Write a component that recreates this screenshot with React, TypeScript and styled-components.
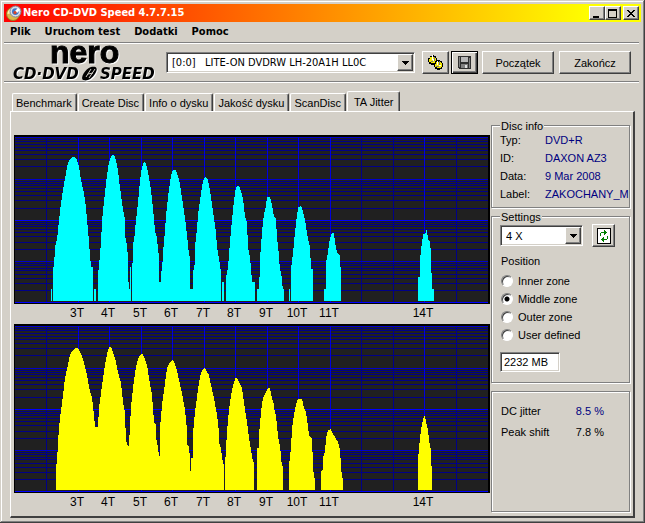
import React, { useState } from "react";
import styled, { createGlobalStyle, css } from "styled-components";

const face = "#d4d0c8";
const shade = "#808080";
const dark = "#404040";
const navy = "#000080";

const GlobalStyle = createGlobalStyle`
  * { box-sizing: border-box; }
  body {
    margin: 0;
    background: ${face};
    color: #000;
    font: 11px/14px "Liberation Sans", Arial, sans-serif;
  }
  button, select, input { font: inherit; color: inherit; }
`;

const raised = css`
  background: ${face};
  border: 1px solid;
  border-color: #fff ${dark} ${dark} #fff;
  box-shadow: inset -1px -1px 0 ${shade};
`;

const sunken = css`
  background: #fff;
  border: 1px solid;
  border-color: ${shade} #fff #fff ${shade};
  box-shadow: inset 1px 1px 0 ${dark}, inset -1px -1px 0 ${face};
`;

const Window = styled.main`
  display: flex;
  flex-direction: column;
  min-height: 100vh;
  padding: 4px 4px 5px;
  background: ${face};
  box-shadow: inset -1px -1px 0 ${dark}, inset 1px 1px 0 ${face},
    inset -2px -2px 0 ${shade}, inset 2px 2px 0 #fff;
`;

const TitleBar = styled.header`
  display: flex;
  align-items: center;
  height: 18px;
  padding: 0 2px;
  background: linear-gradient(90deg, #ff0000, #ffff00 92%);
`;

const Title = styled.h1`
  flex: 1;
  margin: 0 0 0 1px;
  color: #fff;
  font: bold 11px/18px "DejaVu Sans Condensed", "DejaVu Sans", sans-serif;
`;

const CaptionButton = styled.button<{ $apart?: boolean }>`
  ${raised}
  display: grid;
  place-items: center;
  width: 16px;
  height: 14px;
  padding: 0;
  margin-left: ${(p) => (p.$apart ? 2 : 0)}px;
`;

const MenuBar = styled.nav`
  display: flex;
  gap: 14px;
  height: 20px;
  padding: 0 6px;
`;

const MenuLink = styled.a`
  color: #000;
  text-decoration: none;
  font: bold 11px/20px "DejaVu Sans Condensed", "DejaVu Sans", sans-serif;
`;

const Toolbar = styled.div`
  display: flex;
  align-items: center;
  height: 41px;
  margin-right: 2px;
  padding: 0 8px 0 6px;
  border-top: 1px solid ${shade};
  border-bottom: 1px solid #fff;
  box-shadow: inset 0 1px 0 #fff, inset 0 -1px 0 ${shade};
`;

const LogoSvg = styled.svg`
  flex: none;
  overflow: visible;
  filter: drop-shadow(1px 1px 0 #fff);
`;

const ComboFrame = styled.span<{ $grow?: boolean }>`
  ${sunken}
  display: grid;
  align-items: center;
  flex: ${(p) => (p.$grow ? "1 1 0" : "0 0 83px")};
  min-width: 0;
  height: 21px;
  padding: 1px;
`;

const ComboSelect = styled.select<{ $wide?: boolean }>`
  grid-area: 1 / 1;
  appearance: none;
  width: 100%;
  height: 17px;
  padding: 0 18px 0 4px;
  border: 0;
  outline: 0;
  background: transparent;
  white-space: pre;
  ${(p) => p.$wide && css`font: 11px "DejaVu Sans Condensed", "DejaVu Sans", sans-serif;`}
`;

const ComboArrow = styled.span`
  ${raised}
  grid-area: 1 / 1;
  justify-self: end;
  display: grid;
  place-items: center;
  width: 16px;
  height: 17px;
  pointer-events: none;
`;

const Actions = styled.div`
  display: flex;
  gap: 2px;
  margin: 0 4px 0 7px;
`;

const IconButton = styled.button<{ $focused?: boolean; $small?: boolean }>`
  ${raised}
  display: grid;
  place-items: center;
  width: ${(p) => (p.$small ? 23 : 27)}px;
  height: 23px;
  padding: 0;
  ${(p) => p.$focused && css`border-color: #000; box-shadow: inset 1px 1px 0 #fff, inset -1px -1px 0 ${dark}, inset -2px -2px 0 ${shade};`}
`;

const Commands = styled.div`
  display: flex;
  gap: 5px;
`;

const PushButton = styled.button`
  ${raised}
  width: 72px;
  height: 23px;
  padding: 0;
`;

const Tabs = styled.div`
  display: flex;
  align-items: flex-end;
  gap: 1px;
  margin: 8px 0 0 8px;
`;

const Tab = styled.button<{ $active?: boolean }>`
  height: ${(p) => (p.$active ? 21 : 18)}px;
  margin-bottom: ${(p) => (p.$active ? -1 : 0)}px;
  padding: 0 ${(p) => (p.$active ? 6 : 4)}px 0 ${(p) => (p.$active ? 6 : 3)}px;
  background: ${face};
  border: 1px solid;
  border-color: #fff ${dark} transparent #fff;
  border-bottom: 0;
  border-radius: 2px 2px 0 0;
  box-shadow: inset -1px 0 0 ${shade};
  white-space: nowrap;
`;

const Panel = styled.section`
  flex: 1;
  display: grid;
  grid-template-columns: minmax(0, 1fr) 140px;
  gap: 1px;
  margin: 0 6px;
  padding: 0 2px 3px 3px;
  border: solid;
  border-width: 1px 2px 2px 1px;
  border-color: #fff ${dark} ${dark} #fff;
`;

const Charts = styled.div`
  padding-top: 23px;
`;

const ChartSvg = styled.svg`
  display: block;
  width: 100%;
  height: auto;
`;

const ChartLabel = styled.text`
  font: 12px "Liberation Sans", Arial, sans-serif;
  text-anchor: middle;
`;

const Side = styled.aside`
  display: flex;
  flex-direction: column;
  gap: 1px;
  padding: 6px 0 0;
`;

const Group = styled.fieldset<{ $height: number }>`
  min-width: 0;
  min-height: ${(p) => p.$height}px;
  margin: 0 1px 0 0;
  padding: 0 8px;
  border: 1px solid ${shade};
  box-shadow: 1px 1px 0 #fff, inset 1px 1px 0 #fff;
`;

const GroupTitle = styled.legend`
  padding: 2px 1px 0;
  line-height: 12px;
  background: ${face};
`;

const InfoList = styled.dl`
  display: grid;
  grid-template-columns: 45px 1fr;
  line-height: 18px;
  margin: -1px 0 0;
`;

const InfoTerm = styled.dt``;

const InfoValue = styled.dd`
  margin: 0;
  color: ${navy};
  white-space: nowrap;
`;

const SpeedRow = styled.div`
  display: flex;
  align-items: center;
  gap: 9px;
  margin-top: 1px;
`;

const Caption = styled.h2`
  margin: 7px 0 4px 1px;
  font: inherit;
`;

const RadioLabel = styled.label`
  display: flex;
  align-items: center;
  gap: 5px;
  height: 18px;
`;

const Radio = styled.input`
  appearance: none;
  width: 12px;
  height: 12px;
  margin: 0 0 0 1px;
  border: 1px solid;
  border-color: ${shade} #fff #fff ${shade};
  border-radius: 50%;
  background: #fff;
  box-shadow: inset 1px 1px 0 ${dark};
  &:checked {
    background: radial-gradient(circle at center, #000 2px, #fff 3px);
  }
`;

const SizeInput = styled.input`
  ${sunken}
  display: block;
  width: 60px;
  height: 20px;
  margin-top: 8px;
  padding: 0 3px;
`;

const Results = styled.dl`
  flex: 1;
  display: grid;
  grid-template-columns: 1fr auto;
  align-content: start;
  row-gap: 7px;
  margin: 7px 1px 1px 0;
  padding: 12px 25px 0 9px;
  border: 1px solid ${shade};
  box-shadow: 1px 1px 0 #fff, inset 1px 1px 0 #fff;
`;

const ResultValue = styled.dd<{ $blue?: boolean }>`
  margin: 0;
  color: ${(p) => (p.$blue ? navy : "#000")};
`;

const Arrow = () => (
  <svg width="7" height="4" viewBox="0 0 7 4" shapeRendering="crispEdges" aria-hidden="true">
    <path d="M0 0h7v1h-1v1h-1v1h-1v1h-1v-1h-1v-1h-1v-1h-1z" />
  </svg>
);

const AppIcon = () => (
  <svg width="16" height="16" viewBox="0 0 16 16" aria-hidden="true">
    <circle cx="7" cy="9" r="6.5" fill="#d9b84d" stroke="#9c7a20" />
    <path d="M1.5 9A6 6 0 0 1 5 3.5L7 8z" fill="#fff3b0" />
    <circle cx="9.5" cy="6.5" r="5.5" fill="#d8dde8" stroke="#7d8798" />
    <circle cx="9.4" cy="6.6" r="3.4" fill="#3d78c8" />
    <path d="M9 6l3-3 2 2-3 3z" fill="#fff" />
    <circle cx="9" cy="7.6" r="1.6" fill="#d8452c" />
  </svg>
);

const Logo = () => (
  <LogoSvg width="156" height="37" viewBox="0 0 156 37" role="img" aria-label="nero CD-DVD SPEED">
    <text x="40" y="19" fontFamily="Liberation Sans" fontWeight="700" fontSize="32" stroke="#000">nero</text>
    <text x="3" y="35" fontFamily="DejaVu Sans" fontWeight="700" fontStyle="italic" fontSize="15">CD·DVD</text>
    <text x="90" y="35" fontFamily="DejaVu Sans" fontWeight="700" fontStyle="italic" fontSize="15">SPEED</text>
    <path d="M73 36c-3-2 2-11 8-13 5-1 7 1 5 5-2 5-8 10-13 8z" />
    <path d="M76 33l5-8M79 34l6-9M78 30l5-1" stroke={face} strokeWidth="1" />
  </LogoSvg>
);

const DiscsIcon = () => (
  <svg width="17" height="17" viewBox="0 0 17 17" shapeRendering="crispEdges" aria-hidden="true">
    <path d="M3 2h2V1h2v1h2v2h1v4H9v2H7v1H4v-1H2V8H1V4h2z" fill="#000" />
    <path d="M3 3h5v1h1v4H8v1H4V8H2V5h1z" fill="#f5e900" />
    <path d="M5 1h1v5H5zM6 5h2v2H6z" fill="#fff" />
    <path d="M7 3h1v4H7zM4 7h2v1H4z" fill="#777" />
    <path d="M8 7h2V6h3v1h2v2h1v4h-1v2h-2v1h-3v-1H8v-2H7V9h1z" fill="#000" />
    <path d="M9 8h5v1h1v4h-1v1h-4v-1H8v-3h1z" fill="#f5e900" />
    <path d="M10 7h1v4h-1zM12 11h2v1h-2z" fill="#fff" />
    <path d="M12 7h1v4h-1zM9 12h3v1H9z" fill="#777" />
  </svg>
);

const SaveIcon = () => (
  <svg width="13" height="13" viewBox="0 0 13 13" shapeRendering="crispEdges" aria-hidden="true">
    <path d="M0 0h13v13H1l-1-1z" fill="#303030" />
    <path d="M1 1h1v10H1zM11 2h1v10h-1z" fill="#808080" />
    <path d="M3 1h7v5H3z" fill="#b8b8b8" />
    <path d="M3 8h7v4H3z" fill="#808080" />
    <path d="M7 9h2v3H7z" fill="#e0e0e0" />
  </svg>
);

const RefreshIcon = () => (
  <svg width="14" height="16" viewBox="0 0 14 16" shapeRendering="crispEdges" aria-hidden="true">
    <path d="M0 0h14v16H0z" />
    <path d="M1 1h12v14H1z" fill="#fff" />
    <path d="M3 5h1V4h3V2h1v1h1v1h1v1H9v1H8v1H7V5H4v3H3zM11 11h-1v1H7v2H6v-1H5v-1H4v-1h1v-1h1V9h1v2h3V8h1z" fill="#008000" />
  </svg>
);

const majorLines = [137, 179, 220, 261];
const minorLines = [
  139, 141, 144, 147, 150, 154, 159, 166, 181, 183, 185, 188, 191, 195, 200, 208, 222, 224, 226,
  229, 232, 236, 242, 249, 263, 265, 268, 270, 274, 278, 283, 290,
];
const ticks: [number, string][] = [
  [78, "3T"], [109, "4T"], [141, "5T"], [172, "6T"], [204, "7T"], [235, "8T"], [267, "9T"],
  [298, "10T"], [330, "11T"], [424, "14T"],
];

const pitPeaks = [
  "51,301 51,289 52,289 52,301",
  "53,301 53,267 54,267 55,248 56,242 57,240 59,220 61,203 63,190 66,173 68,163 71,158 72,157 75,157 77,160 79,167 81,180 84,193 86,208 88,230 90,255 91,267 93,267 93,301",
  "94,301 94,289 96,289 96,301",
  "98,301 98,273 99,268 100,253 101,243 102,222 103,210 105,193 107,175 109,162 111,157 112,155 114,155 116,160 118,170 119,180 121,195 123,209 125,220 125,235 127,246 128,258 128,282 129,282 129,289 130,289 130,267 131,267 131,301",
  "132,301 132,282 133,244 134,241 136,220 138,203 140,181 142,167 144,162 145,162 147,167 149,178 151,190 153,208 155,231 157,237 158,250 159,255 159,282 161,282 161,273 162,270 163,255 164,240 165,232 166,215 167,207 169,189 171,176 173,170 176,170 178,176 180,184 182,198 184,211 186,226 188,245 189,254 190,258 190,289 193,289 193,273 195,262 195,247 197,229 198,215 200,201 202,186 204,178 206,177 208,180 210,190 212,204 214,218 216,232 217,247 219,259 221,272 221,301",
  "222,301 222,282 224,282 224,301",
  "226,301 226,277 228,268 229,255 230,242 232,220 234,200 236,187 237,186 239,186 241,191 243,199 245,216 247,223 248,247 250,258 251,268 252,282 255,282 255,301",
  "257,301 257,289 259,289 259,277 260,277 260,258 261,247 262,232 264,214 266,206 267,197 270,197 272,205 274,217 276,219 277,238 279,255 280,273 281,269 282,282 283,289 284,289 284,301",
  "289,301 289,289 290,289 290,301",
  "291,301 291,269 293,253 295,232 297,215 299,205 300,208 301,205 303,212 305,220 307,233 309,243 310,246 311,269 313,269 313,301",
  "324,301 324,289 326,289 326,263 328,252 330,238 332,233 334,233 335,243 337,252 340,256 340,267 341,267 341,301",
  "418,301 418,277 420,277 420,260 422,242 424,232 425,236 426,230 427,230 428,240 430,241 431,255 432,289 434,289 434,301",
];

const landPeaks = [
  "56,301 56,277 57,273 58,254 59,239 60,229 62,214 63,206 65,189 68,176 70,166 73,161 75,159 77,159 79,161 82,167 84,174 87,186 89,198 92,209 94,226 95,238 98,238 99,219 101,204 103,189 105,176 107,165 109,158 111,158 113,163 115,169 118,183 121,194 123,213 125,224 126,253 127,254 128,257 129,257 130,236 131,218 133,199 135,184 137,173 140,166 142,164 144,168 147,176 149,189 152,206 154,233 156,236 156,249 158,258 159,267 160,267 160,239 162,216 165,194 167,179 170,173 172,171 174,173 177,181 179,191 182,204 185,221 187,241 187,256 189,258 190,269 190,282 191,282 191,269 193,269 193,244 195,223 197,208 199,193 201,184 204,179 206,181 209,186 211,196 214,209 217,226 219,243 219,253 221,259 222,269 224,277 224,301",
  "225,301 225,277 226,259 227,243 229,221 231,206 234,193 236,188 238,191 242,199 245,221 247,233 249,249 251,261 253,273 254,273 254,301",
  "257,301 257,259 259,259 259,246 261,223 263,209 266,203 268,199 270,199 272,209 274,216 275,225 276,226 277,238 279,254 280,256 281,268 282,277 283,277 283,301",
  "289,301 289,276 291,259 292,239 294,226 296,216 298,210 302,210 304,219 306,223 308,238 309,246 312,250 313,276 314,289 315,289 315,301",
  "321,301 321,282 323,281 323,269 325,263 326,249 328,241 331,240 332,243 335,248 338,253 340,261 341,276 342,289 343,289 343,301",
  "418,301 418,273 419,258 421,241 423,231 424,227 425,227 426,233 428,241 429,251 431,261 431,276 432,278 432,301",
];

function Chart({ peaks, color, label }: { peaks: string[]; color: string; label: string }) {
  return (
    <ChartSvg viewBox="14 135 476 189" role="img" aria-label={label}>
      <g shapeRendering="crispEdges">
        <rect x="14" y="135" width="476" height="169" fill="#000" />
        <rect x="15" y="137" width="473" height="166" fill="#202020" />
        {minorLines.map((y) => <rect key={y} x="15" y={y} width="473" height="1" fill="#000088" />)}
        {[46, 361, 393, 456].map((x) => <rect key={x} x={x} y="137" width="1" height="165" fill="#000088" />)}
        {majorLines.map((y) => <rect key={y} x="15" y={y} width="473" height="1" fill={y === 220 ? "#0000ff" : "#0000cc"} />)}
        {ticks.map(([x]) => <rect key={x} x={x} y="137" width="1" height="165" fill="#0000e0" />)}
        <rect x="15" y="302" width="473" height="1" fill="#0000ff" />
        {peaks.map((points) => <polygon key={points} points={points} fill={color} />)}
      </g>
      {ticks.map(([x, text]) => <ChartLabel key={x} x={x - 1} y="317">{text}</ChartLabel>)}
    </ChartSvg>
  );
}

const tabNames = ["Benchmark", "Create Disc", "Info o dysku", "Jakość dysku", "ScanDisc", "TA Jitter"];
const zones = ["Inner zone", "Middle zone", "Outer zone", "User defined"];
const disc = [["Typ:", "DVD+R"], ["ID:", "DAXON AZ3"], ["Data:", "9 Mar 2008"], ["Label:", "ZAKOCHANY_M"]];

export default function App() {
  const [tab, setTab] = useState("TA Jitter");
  const [zone, setZone] = useState("Middle zone");
  return (
    <>
      <GlobalStyle />
      <Window>
        <TitleBar>
          <AppIcon />
          <Title>Nero CD-DVD Speed 4.7.7.15</Title>
          <CaptionButton aria-label="Minimize">
            <svg width="10" height="9" shapeRendering="crispEdges"><path d="M1 7h6v2H1z" /></svg>
          </CaptionButton>
          <CaptionButton aria-label="Maximize">
            <svg width="10" height="9" shapeRendering="crispEdges"><path d="M0 0h9v9H0zM1 2v6h7V2z" fillRule="evenodd" /></svg>
          </CaptionButton>
          <CaptionButton $apart aria-label="Close">
            <svg width="8" height="7" shapeRendering="crispEdges"><path d="M0 0h2v1h1v1h2V1h1V0h2v1H7v1H6v1H5v1h1v1h1v1h1v1H6V6H5V5H3v1H2v1H0V6h1V5h1V4h1V3H2V2H1V1H0z" /></svg>
          </CaptionButton>
        </TitleBar>
        <MenuBar>
          {["Plik", "Uruchom test", "Dodatki", "Pomoc"].map((m) => <MenuLink key={m} href="#">{m}</MenuLink>)}
        </MenuBar>
        <Toolbar>
          <Logo />
          <ComboFrame $grow>
            <ComboSelect $wide aria-label="Drive">
              <option>{"[0:0]\u00a0\u00a0 LITE-ON DVDRW LH-20A1H LL0C"}</option>
            </ComboSelect>
            <ComboArrow><Arrow /></ComboArrow>
          </ComboFrame>
          <Actions>
            <IconButton aria-label="Discs"><DiscsIcon /></IconButton>
            <IconButton $focused aria-label="Save"><SaveIcon /></IconButton>
          </Actions>
          <Commands>
            <PushButton>Początek</PushButton>
            <PushButton>Zakończ</PushButton>
          </Commands>
        </Toolbar>
        <Tabs role="tablist">
          {tabNames.map((name) => (
            <Tab key={name} role="tab" aria-selected={name === tab} $active={name === tab} onClick={() => setTab(name)}>
              {name}
            </Tab>
          ))}
        </Tabs>
        <Panel>
          <Charts>
            <Chart peaks={pitPeaks} color="#00ffff" label="Pit lengths" />
            <Chart peaks={landPeaks} color="#ffff00" label="Land lengths" />
          </Charts>
          <Side>
            <Group $height={90}>
              <GroupTitle>Disc info</GroupTitle>
              <InfoList>
                {disc.map(([term, value]) => (
                  <React.Fragment key={term}>
                    <InfoTerm>{term}</InfoTerm>
                    <InfoValue>{value}</InfoValue>
                  </React.Fragment>
                ))}
              </InfoList>
            </Group>
            <Group $height={174}>
              <GroupTitle>Settings</GroupTitle>
              <SpeedRow>
                <ComboFrame>
                  <ComboSelect aria-label="Speed"><option>4 X</option></ComboSelect>
                  <ComboArrow><Arrow /></ComboArrow>
                </ComboFrame>
                <IconButton $small aria-label="Refresh"><RefreshIcon /></IconButton>
              </SpeedRow>
              <Caption>Position</Caption>
              {zones.map((name) => (
                <RadioLabel key={name}>
                  <Radio type="radio" name="zone" checked={zone === name} onChange={() => setZone(name)} />
                  {name}
                </RadioLabel>
              ))}
              <SizeInput aria-label="Size" defaultValue="2232 MB" />
            </Group>
            <Results>
              <dt>DC jitter</dt>
              <ResultValue $blue>8.5 %</ResultValue>
              <dt>Peak shift</dt>
              <ResultValue>7.8 %</ResultValue>
            </Results>
          </Side>
        </Panel>
      </Window>
    </>
  );
}
